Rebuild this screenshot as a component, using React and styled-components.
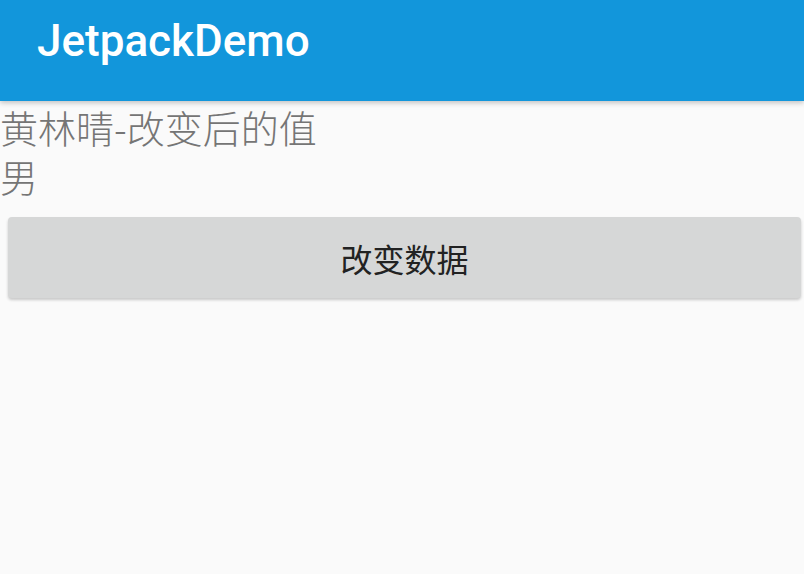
import React from 'react'
import styled, { createGlobalStyle } from "styled-components";

const GlobalStyle = createGlobalStyle`
    html, body {
        margin: 0;
        padding: 0;
        background: #fafafa;
    }
    body {
        font-family: 'Roboto', 'Noto Sans CJK SC', sans-serif;
    }
`;

function App() {
    return (
        <Root>
            <GlobalStyle />
            <AppBar>
                <Title>JetpackDemo</Title>
            </AppBar>
            <Content>
                <InfoText>黄林晴-改变后的值</InfoText>
                <InfoText>男</InfoText>
                <ChangeButton>改变数据</ChangeButton>
            </Content>
        </Root>
    )
}

const Root = styled.div`
    width: 804px;
    height: 574px;
    background: #fafafa;
    overflow: hidden;
`;

const AppBar = styled.header`
    display: flex;
    align-items: center;
    height: 101px;
    padding: 0 37px;
    box-sizing: border-box;
    background: #1296db;
    box-shadow: 0 2px 5px rgba(0, 0, 0, 0.22);
    position: relative;
    z-index: 1;
`;

const Title = styled.h1`
    margin: 0 0 20px 0;
    font-family: 'Roboto', sans-serif;
    font-weight: 500;
    font-size: 44px;
    color: #ffffff;
`;

const Content = styled.main`
    display: flex;
    flex-direction: column;
    padding-top: 1px;
`;

const InfoText = styled.p`
    margin: 0;
    font-family: 'Noto Sans CJK SC', sans-serif;
    font-weight: 300;
    font-size: 38px;
    line-height: 49px;
    color: #757575;
`;

const ChangeButton = styled.button`
    display: flex;
    align-items: center;
    justify-content: center;
    height: 81px;
    margin: 17px 3px 0 8px;
    border: none;
    border-radius: 4px;
    background: #d6d7d7;
    box-shadow: 0 2px 3px rgba(0, 0, 0, 0.2);
    font-family: 'Noto Sans CJK SC', sans-serif;
    font-size: 32px;
    color: #222222;
    cursor: pointer;
`;

export default App
